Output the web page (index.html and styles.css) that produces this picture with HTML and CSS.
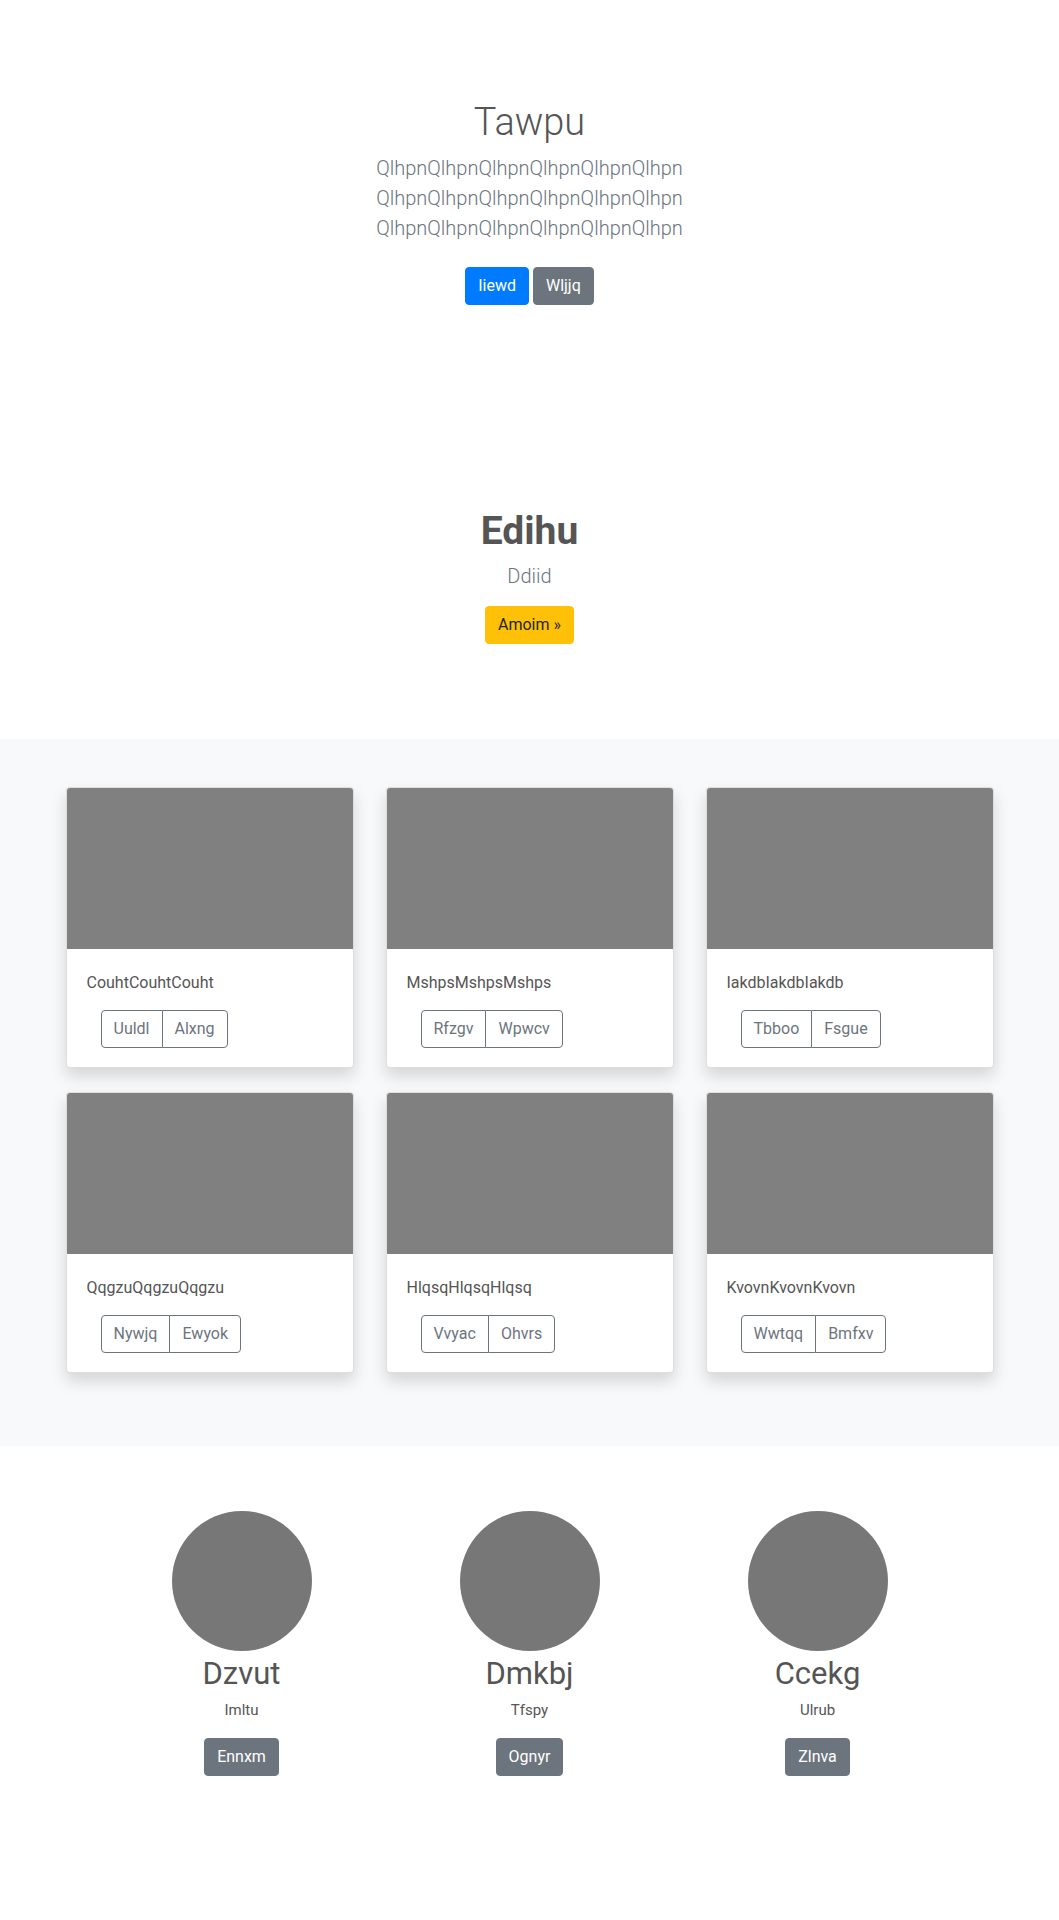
FILE: index.html
```html
<!DOCTYPE html>
<html lang="en">
<head>
<meta charset="utf-8">
<title>Tawpu</title>
<link rel="stylesheet" href="styles.css">
</head>
<body>
<main>
  <section class="hero">
    <div class="hero-inner">
      <h1 class="hero-title">Tawpu</h1>
      <p class="lead muted">QlhpnQlhpnQlhpnQlhpnQlhpnQlhpn QlhpnQlhpnQlhpnQlhpnQlhpnQlhpn QlhpnQlhpnQlhpnQlhpnQlhpnQlhpn</p>
      <p class="hero-actions"><a class="btn btn-primary btn-spaced" href="#">Iiewd</a> <a class="btn btn-secondary btn-spaced" href="#">Wljjq</a></p>
    </div>
  </section>

  <section class="feature">
    <h1 class="feature-title">Edihu</h1>
    <p class="lead muted feature-lead">Ddiid</p>
    <p class="feature-actions"><a class="btn btn-warning" href="#">Amoim &raquo;</a></p>
  </section>

  <section class="album">
    <div class="card-grid">
      <div class="card">
        <div class="card-img"></div>
        <div class="card-body">
          <p class="card-text">CouhtCouhtCouht</p>
          <div class="btn-group"><button class="btn btn-outline">Uuldl</button><button class="btn btn-outline">Alxng</button></div>
        </div>
      </div>
      <div class="card">
        <div class="card-img"></div>
        <div class="card-body">
          <p class="card-text">MshpsMshpsMshps</p>
          <div class="btn-group"><button class="btn btn-outline">Rfzgv</button><button class="btn btn-outline">Wpwcv</button></div>
        </div>
      </div>
      <div class="card">
        <div class="card-img"></div>
        <div class="card-body">
          <p class="card-text">IakdbIakdbIakdb</p>
          <div class="btn-group"><button class="btn btn-outline">Tbboo</button><button class="btn btn-outline">Fsgue</button></div>
        </div>
      </div>
      <div class="card">
        <div class="card-img"></div>
        <div class="card-body">
          <p class="card-text">QqgzuQqgzuQqgzu</p>
          <div class="btn-group"><button class="btn btn-outline">Nywjq</button><button class="btn btn-outline">Ewyok</button></div>
        </div>
      </div>
      <div class="card">
        <div class="card-img"></div>
        <div class="card-body">
          <p class="card-text">HlqsqHlqsqHlqsq</p>
          <div class="btn-group"><button class="btn btn-outline">Vvyac</button><button class="btn btn-outline">Ohvrs</button></div>
        </div>
      </div>
      <div class="card">
        <div class="card-img"></div>
        <div class="card-body">
          <p class="card-text">KvovnKvovnKvovn</p>
          <div class="btn-group"><button class="btn btn-outline">Wwtqq</button><button class="btn btn-outline">Bmfxv</button></div>
        </div>
      </div>
    </div>
  </section>

  <section class="team">
    <div class="team-grid">
      <div class="member">
        <div class="avatar"></div>
        <h2 class="member-name">Dzvut</h2>
        <p class="member-role">Imltu</p>
        <p class="member-action"><a class="btn btn-secondary" href="#">Ennxm</a></p>
      </div>
      <div class="member">
        <div class="avatar"></div>
        <h2 class="member-name">Dmkbj</h2>
        <p class="member-role">Tfspy</p>
        <p class="member-action"><a class="btn btn-secondary" href="#">Ognyr</a></p>
      </div>
      <div class="member">
        <div class="avatar"></div>
        <h2 class="member-name">Ccekg</h2>
        <p class="member-role">Ulrub</p>
        <p class="member-action"><a class="btn btn-secondary" href="#">Zlnva</a></p>
      </div>
    </div>
  </section>
</main>
</body>
</html>
```

FILE: styles.css
```css
* { box-sizing: border-box; }

html, body {
  margin: 0;
  padding: 0;
  background: #fff;
}

body {
  font-family: Roboto, "Liberation Sans", sans-serif;
  font-size: 16px;
  line-height: 1.5;
  color: #555;
}

p { margin: 0; }
h1, h2 { margin: 0; }

/* ---------- buttons ---------- */
.btn {
  display: inline-block;
  font-family: inherit;
  font-size: 16px;
  font-weight: 400;
  line-height: 24px;
  padding: 6px 12px;
  border: 1px solid transparent;
  border-radius: 4px;
  text-decoration: none;
  text-align: center;
  vertical-align: middle;
  cursor: pointer;
  background: transparent;
}

.btn-primary { background: #007bff; border-color: #007bff; color: #fff; }
.btn-secondary { background: #6c757d; border-color: #6c757d; color: #fff; }
.btn-warning { background: #ffc107; border-color: #ffc107; color: #212529; }
.btn-outline { background: #fff; border-color: #6c757d; color: #6c757d; }

.btn-spaced { margin: 8px 0; }

.btn-group {
  display: inline-flex;
  margin-left: 14px;
}
.btn-group .btn { border-radius: 0; }
.btn-group .btn:first-child { border-radius: 4px 0 0 4px; }
.btn-group .btn:last-child { border-radius: 0 4px 4px 0; margin-left: -1px; }

/* ---------- hero ---------- */
.hero {
  text-align: center;
  padding: 100px 0 96px;
}

.hero-inner {
  width: 456px;
  margin: 0 auto;
}

.hero-title {
  font-size: 37.9px;
  font-weight: 300;
  line-height: 45.5px;
  margin-bottom: 7px;
  color: #555;
}

.lead {
  font-size: 20px;
  font-weight: 300;
  line-height: 30px;
}

.muted { color: #6c757d; }

.hero .lead { margin-bottom: 16px; }

.hero-actions { line-height: 24px; }

/* ---------- feature ---------- */
.feature {
  text-align: center;
  padding: 100px 0 96px;
}

.feature-title {
  font-size: 39px;
  font-weight: 700;
  line-height: 45.6px;
  margin-bottom: 7px;
  color: #555;
}

.feature-lead { margin-bottom: 14px; }

.feature-actions { line-height: 38px; height: 38px; }

/* ---------- album ---------- */
.album {
  background: #f8f9fa;
  padding: 48px 0 73px;
}

.card-grid {
  width: 928px;
  margin: 0 auto;
  display: grid;
  grid-template-columns: repeat(3, 288px);
  column-gap: 32px;
  row-gap: 24px;
}

.card {
  background: #fff;
  border: 1px solid rgba(0, 0, 0, 0.125);
  border-radius: 4px;
  overflow: hidden;
  box-shadow: 0 8px 16px rgba(0, 0, 0, 0.15);
}

.card-img {
  height: 161px;
  background: #808080;
}

.card-body {
  padding: 22px 20px 19px;
}

.card-text {
  margin-bottom: 15px;
  line-height: 24px;
}

/* ---------- team ---------- */
.team {
  padding: 65px 0 96px;
}

.team-grid {
  width: 864px;
  margin: 0 auto;
  display: grid;
  grid-template-columns: repeat(3, 1fr);
  text-align: center;
}

.avatar {
  width: 140px;
  height: 140px;
  border-radius: 50%;
  background: #777;
  margin: 0 auto;
}

.member-name {
  font-size: 31px;
  font-weight: 400;
  line-height: 36.8px;
  margin-top: 5px;
  margin-bottom: 7px;
  color: #555;
}

.member-role {
  font-size: 15px;
  line-height: 21px;
  margin-bottom: 17px;
}

.member-action { height: 38px; }
```
